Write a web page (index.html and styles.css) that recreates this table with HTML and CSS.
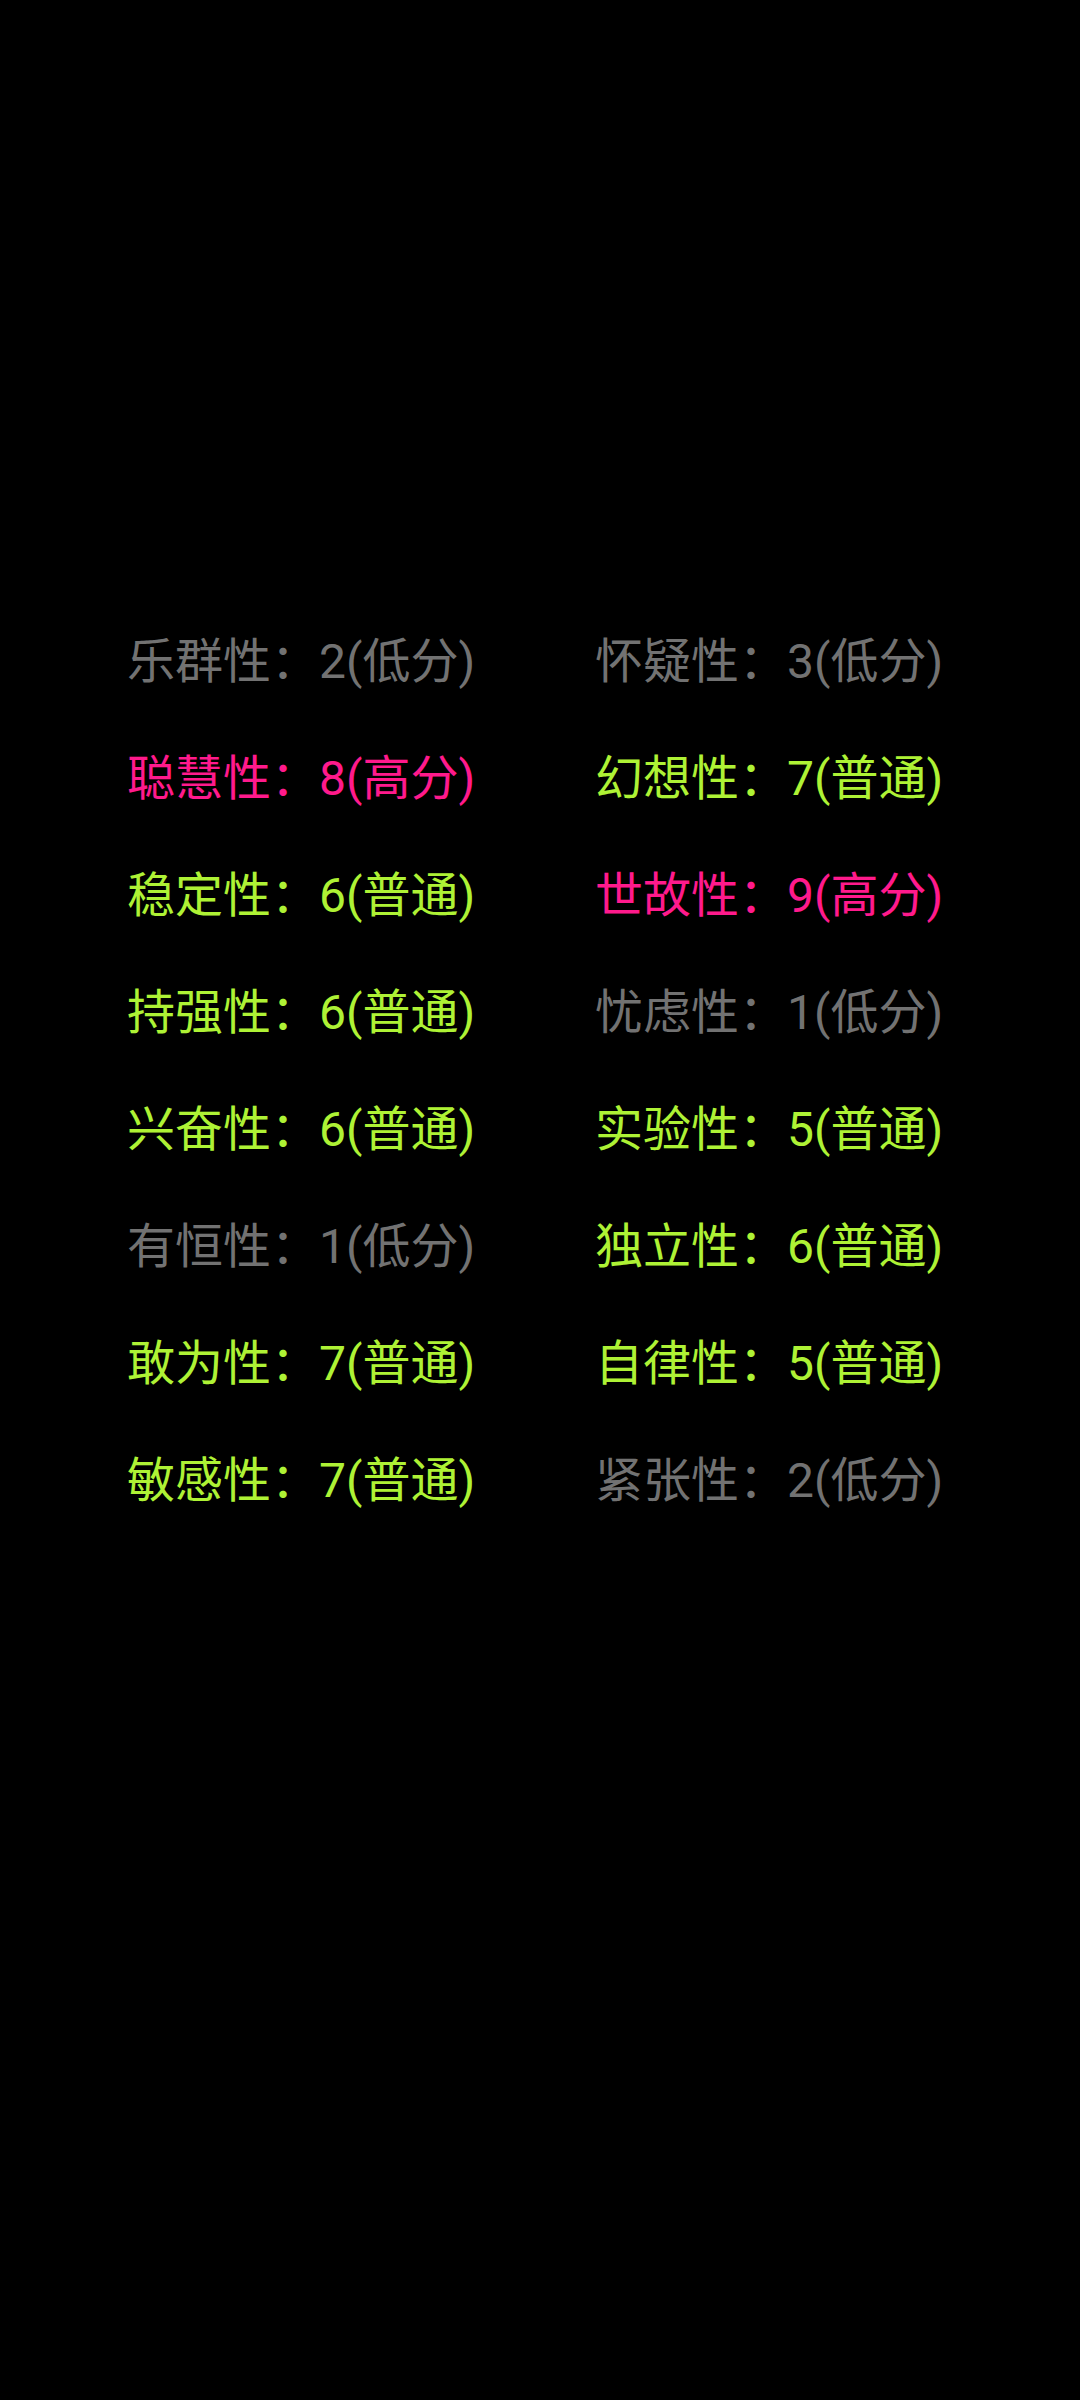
FILE: index.html
```html
<!DOCTYPE html>
<html lang="zh-CN">
<head>
<meta charset="utf-8">
<link rel="stylesheet" href="styles.css">
</head>
<body>
<main class="screen">
  <div class="grid">
    <div class="item low">乐群性：2(低分)</div>
    <div class="item low">怀疑性：3(低分)</div>
    <div class="item high">聪慧性：8(高分)</div>
    <div class="item mid">幻想性：7(普通)</div>
    <div class="item mid">稳定性：6(普通)</div>
    <div class="item high">世故性：9(高分)</div>
    <div class="item mid">持强性：6(普通)</div>
    <div class="item low">忧虑性：1(低分)</div>
    <div class="item mid">兴奋性：6(普通)</div>
    <div class="item mid">实验性：5(普通)</div>
    <div class="item low">有恒性：1(低分)</div>
    <div class="item mid">独立性：6(普通)</div>
    <div class="item mid">敢为性：7(普通)</div>
    <div class="item mid">自律性：5(普通)</div>
    <div class="item mid">敏感性：7(普通)</div>
    <div class="item low">紧张性：2(低分)</div>
  </div>
</main>
</body>
</html>
```

FILE: styles.css
```css
html, body {
  margin: 0;
  padding: 0;
  background: #000;
}
.screen {
  width: 1080px;
  height: 2400px;
  background: #000;
  padding-top: 603px;
  box-sizing: border-box;
}
.grid {
  display: grid;
  grid-template-columns: 468px auto;
  padding-left: 127px;
}
.item {
  height: 117px;
  line-height: 117px;
  font-family: Roboto, "Noto Sans CJK SC", sans-serif;
  font-size: 48px;
  white-space: nowrap;
}
.low { color: #727272; }
.high { color: #ff1a8c; }
.mid { color: #aef235; }
```
